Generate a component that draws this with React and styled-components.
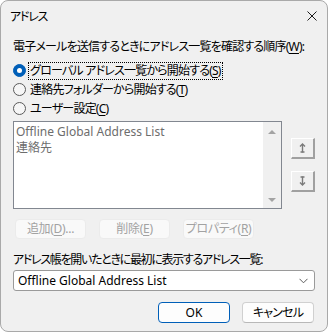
import React from 'react'
import styled, { createGlobalStyle } from 'styled-components'

const GlobalStyle = createGlobalStyle`
  html, body {
    margin: 0;
    padding: 0;
    background: #ffffff;
  }
  body {
    font-family: "Noto Sans", "Noto Sans CJK JP", sans-serif;
    font-size: 12px;
    color: #000;
  }
`

const Window = styled.div`
  box-sizing: border-box;
  width: 328px;
  height: 332px;
  display: flex;
  flex-direction: column;
  background: #f0f0f0;
  border: 1px solid #a9a9a9;
  border-radius: 8px;
  overflow: hidden;
  font-feature-settings: "palt" 1;
  letter-spacing: -0.8px;
`

const TitleBar = styled.div`
  height: 31px;
  display: flex;
  align-items: center;
  justify-content: space-between;
  padding: 0 10px 0 9px;
`

const Title = styled.span`
  font-size: 12px;
  line-height: 16px;
  letter-spacing: -1.2px;
`

const CloseButton = styled.div`
  width: 10px;
  height: 10px;
  display: flex;
  margin-top: -2px;
`

const Body = styled.div`
  flex: 1;
  display: flex;
  flex-direction: column;
  padding: 7px 12px 0 12px;
`

const Label = styled.div`
  line-height: 16px;
  margin-top: ${({mt}) => mt || 0}px;
  letter-spacing: ${({tight}) => tight ? '-1.3px' : '-0.8px'};
  white-space: nowrap;
`

const Key = styled.span`
  text-decoration: underline;
  text-underline-offset: 2px;
`

const RadioGroup = styled.div`
  display: flex;
  flex-direction: column;
  margin-top: 6px;
`

const RadioRow = styled.div`
  height: 19px;
  display: flex;
  align-items: center;
  gap: 3px;
`

const RadioDot = styled.span`
  box-sizing: border-box;
  width: 13px;
  height: 13px;
  border-radius: 50%;
  flex: none;
  display: flex;
  align-items: center;
  justify-content: center;
  background: ${({checked}) => checked ? '#005fb8' : '#f6f6f6'};
  border: 1px solid ${({checked}) => checked ? '#005fb8' : '#5a5a5a'};
  &::after {
    content: '';
    display: ${({checked}) => checked ? 'block' : 'none'};
    width: 5px;
    height: 5px;
    border-radius: 50%;
    background: #fff;
  }
`

const RadioText = styled.span`
  line-height: 16px;
  padding: 0 1px;
  white-space: nowrap;
  outline: ${({focused}) => focused ? '1px dotted #000' : 'none'};
`

const ListArea = styled.div`
  display: flex;
  margin-top: 3px;
  gap: 9px;
`

const ListBox = styled.div`
  box-sizing: border-box;
  width: 269px;
  height: 88px;
  display: flex;
  background: #fff;
  border: 1px solid #828790;
`

const ListItems = styled.div`
  flex: 1;
  padding: 2px 2px;
  color: #6d6d6d;
  line-height: 16px;
  letter-spacing: 0;
`

const ScrollBar = styled.div`
  width: 18px;
  display: flex;
  flex-direction: column;
  justify-content: space-between;
  align-items: center;
  padding: 8px 0 6px;
  background: #f0f0f0;
`

const Arrow = styled.span`
  width: 0;
  height: 0;
  border-left: 4px solid transparent;
  border-right: 4px solid transparent;
  ${({down}) => down
    ? 'border-top: 4px solid #a3a3a3;'
    : 'border-bottom: 4px solid #a3a3a3;'}
`

const SideButtons = styled.div`
  display: flex;
  flex-direction: column;
  gap: 12px;
  padding-top: 17px;
`

const ClassicButton = styled.div`
  box-sizing: border-box;
  width: 24px;
  height: 21px;
  display: flex;
  align-items: center;
  justify-content: center;
  background: #f0f0f0;
  border-top: 1px solid #ffffff;
  border-left: 1px solid #ffffff;
  border-right: 2px solid #a0a0a0;
  border-bottom: 2px solid #a0a0a0;
`

const ActionRow = styled.div`
  display: flex;
  gap: 13px;
  margin-top: 10px;
  padding-left: 2px;
`

const DisabledButton = styled.div`
  box-sizing: border-box;
  width: 71px;
  height: 20px;
  display: flex;
  align-items: center;
  justify-content: center;
  background: #f9f9f9;
  border: 1px solid #ebebeb;
  border-radius: 4px;
  color: #a2a2a2;
  line-height: 16px;
  letter-spacing: -0.3px;
`

const Select = styled.div`
  box-sizing: border-box;
  height: 21px;
  margin-top: 2px;
  display: flex;
  align-items: center;
  justify-content: space-between;
  padding: 0 6px 0 4px;
  background: #fff;
  border: 1px solid #9a9a9a;
  border-radius: 3px;
  letter-spacing: 0;
`

const Footer = styled.div`
  display: flex;
  justify-content: flex-end;
  gap: 12px;
  margin-top: 11px;
  padding-right: 1px;
`

const DialogButton = styled.div`
  box-sizing: border-box;
  width: 72px;
  height: 21px;
  display: flex;
  align-items: center;
  justify-content: center;
  background: #fdfdfd;
  border: 1px solid ${({primary}) => primary ? '#005fb8' : '#d0d0d0'};
  border-bottom-color: ${({primary}) => primary ? '#005fb8' : '#b8b8b8'};
  border-radius: 4px;
  line-height: 16px;
  letter-spacing: ${({primary}) => primary ? '0' : '-0.8px'};
`

const MoveIcon = ({down}) => (
  <svg width="7" height="10" viewBox="0 0 7 10">
    <g stroke="#7a7a7a" strokeWidth="1.4" fill="none">
      {down ? (
        <>
          <path d="M3.5 0.5 V8.5" />
          <path d="M1 6.5 L3.5 9 L6 6.5" />
          <path d="M1.5 1 H5.5" />
        </>
      ) : (
        <>
          <path d="M3.5 1.5 V9.5" />
          <path d="M1 3.5 L3.5 1 L6 3.5" />
          <path d="M1.5 9 H5.5" />
        </>
      )}
    </g>
  </svg>
)

export default function App() {
  return (
    <>
      <GlobalStyle />
      <Window>
        <TitleBar>
          <Title>アドレス</Title>
          <CloseButton>
            <svg width="10" height="10" viewBox="0 0 10 10">
              <path d="M0.5 0.5 L9.5 9.5 M9.5 0.5 L0.5 9.5" stroke="#1b1b1b" strokeWidth="1" />
            </svg>
          </CloseButton>
        </TitleBar>
        <Body>
          <Label>電子メールを送信するときにアドレス一覧を確認する順序(<Key>W</Key>):</Label>
          <RadioGroup>
            <RadioRow>
              <RadioDot checked />
              <RadioText focused>グローバル アドレス一覧から開始する(<Key>S</Key>)</RadioText>
            </RadioRow>
            <RadioRow>
              <RadioDot />
              <RadioText>連絡先フォルダーから開始する(<Key>T</Key>)</RadioText>
            </RadioRow>
            <RadioRow>
              <RadioDot />
              <RadioText>ユーザー設定(<Key>C</Key>)</RadioText>
            </RadioRow>
          </RadioGroup>
          <ListArea>
            <ListBox>
              <ListItems>
                <div>Offline Global Address List</div>
                <div>連絡先</div>
              </ListItems>
              <ScrollBar>
                <Arrow />
                <Arrow down />
              </ScrollBar>
            </ListBox>
            <SideButtons>
              <ClassicButton><MoveIcon /></ClassicButton>
              <ClassicButton><MoveIcon down /></ClassicButton>
            </SideButtons>
          </ListArea>
          <ActionRow>
            <DisabledButton>追加(<Key>D</Key>)...</DisabledButton>
            <DisabledButton>削除(<Key>E</Key>)</DisabledButton>
            <DisabledButton>プロパティ(<Key>R</Key>)</DisabledButton>
          </ActionRow>
          <Label mt={13} tight>アドレス帳を開いたときに最初に表示するアドレス一覧:</Label>
          <Select>
            <span>Offline Global Address List</span>
            <svg width="9" height="6" viewBox="0 0 9 6">
              <path d="M0.5 0.8 L4.5 4.8 L8.5 0.8" stroke="#5c5c5c" strokeWidth="1" fill="none" />
            </svg>
          </Select>
          <Footer>
            <DialogButton primary>OK</DialogButton>
            <DialogButton>キャンセル</DialogButton>
          </Footer>
        </Body>
      </Window>
    </>
  )
}
